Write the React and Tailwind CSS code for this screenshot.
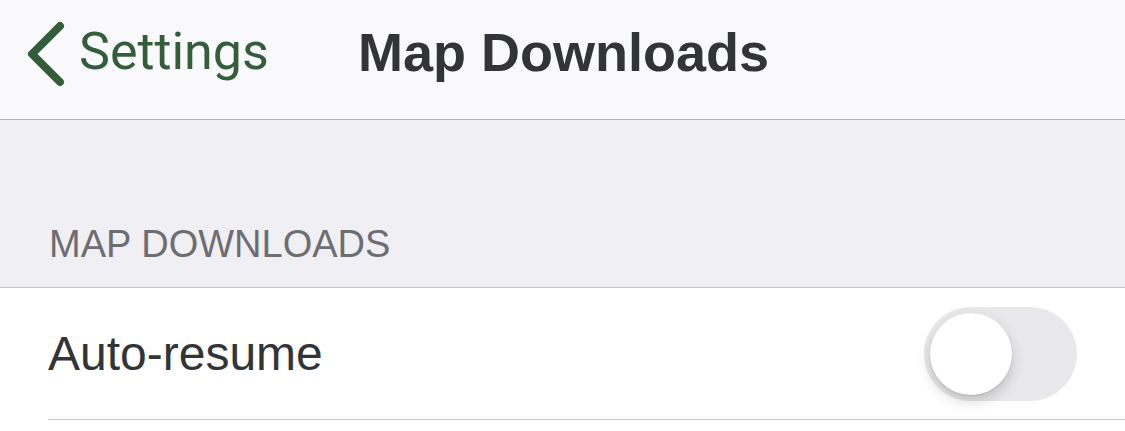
const Toggle = () => (
  <div className="w-[153px] h-[94px] rounded-full bg-[#e9e9eb] flex items-center pl-[6px]">
    <div className="w-[82px] h-[82px] rounded-full bg-white shadow-[0_6px_14px_rgba(0,0,0,0.18),0_1px_2px_rgba(0,0,0,0.1)]" />
  </div>
);

export default function App() {
  return (
    <div className="w-[1125px] h-[431px] bg-white font-['Liberation_Sans',Arial,sans-serif] overflow-hidden">
      {/* Nav bar */}
      <div className="h-[120px] bg-[#f9f9fb] border-b border-[#b3b3b5] flex items-center pb-[16px]">
        <div className="flex items-center pl-[24px] w-[358px]">
          <svg width="44" height="68" viewBox="0 0 44 68" className="mt-[4px]">
            <path d="M36 6 L8 34 L36 62" fill="none" stroke="#335e39" strokeWidth="8" strokeLinecap="round" strokeLinejoin="round" />
          </svg>
          <span className="ml-[11px] text-[52px] text-[#335e39] font-['Roboto',sans-serif] leading-none">Settings</span>
        </div>
        <span className="text-[54px] font-bold text-[#333436] leading-none">Map Downloads</span>
      </div>

      {/* Section header */}
      <div className="h-[168px] bg-[#f0eff4] border-b border-[#c6c6c8] flex items-end pl-[49px] pb-[24px]">
        <span className="text-[38px] text-[#6d6d72] leading-none">MAP DOWNLOADS</span>
      </div>

      {/* Row */}
      <div className="pl-[48px]">
        <div className="h-[132px] border-b border-[#c8c8ca] flex items-center justify-between pr-[48px]">
          <span className="text-[48px] text-[#333436] leading-none">Auto-resume</span>
          <Toggle />
        </div>
      </div>
    </div>
  );
}
